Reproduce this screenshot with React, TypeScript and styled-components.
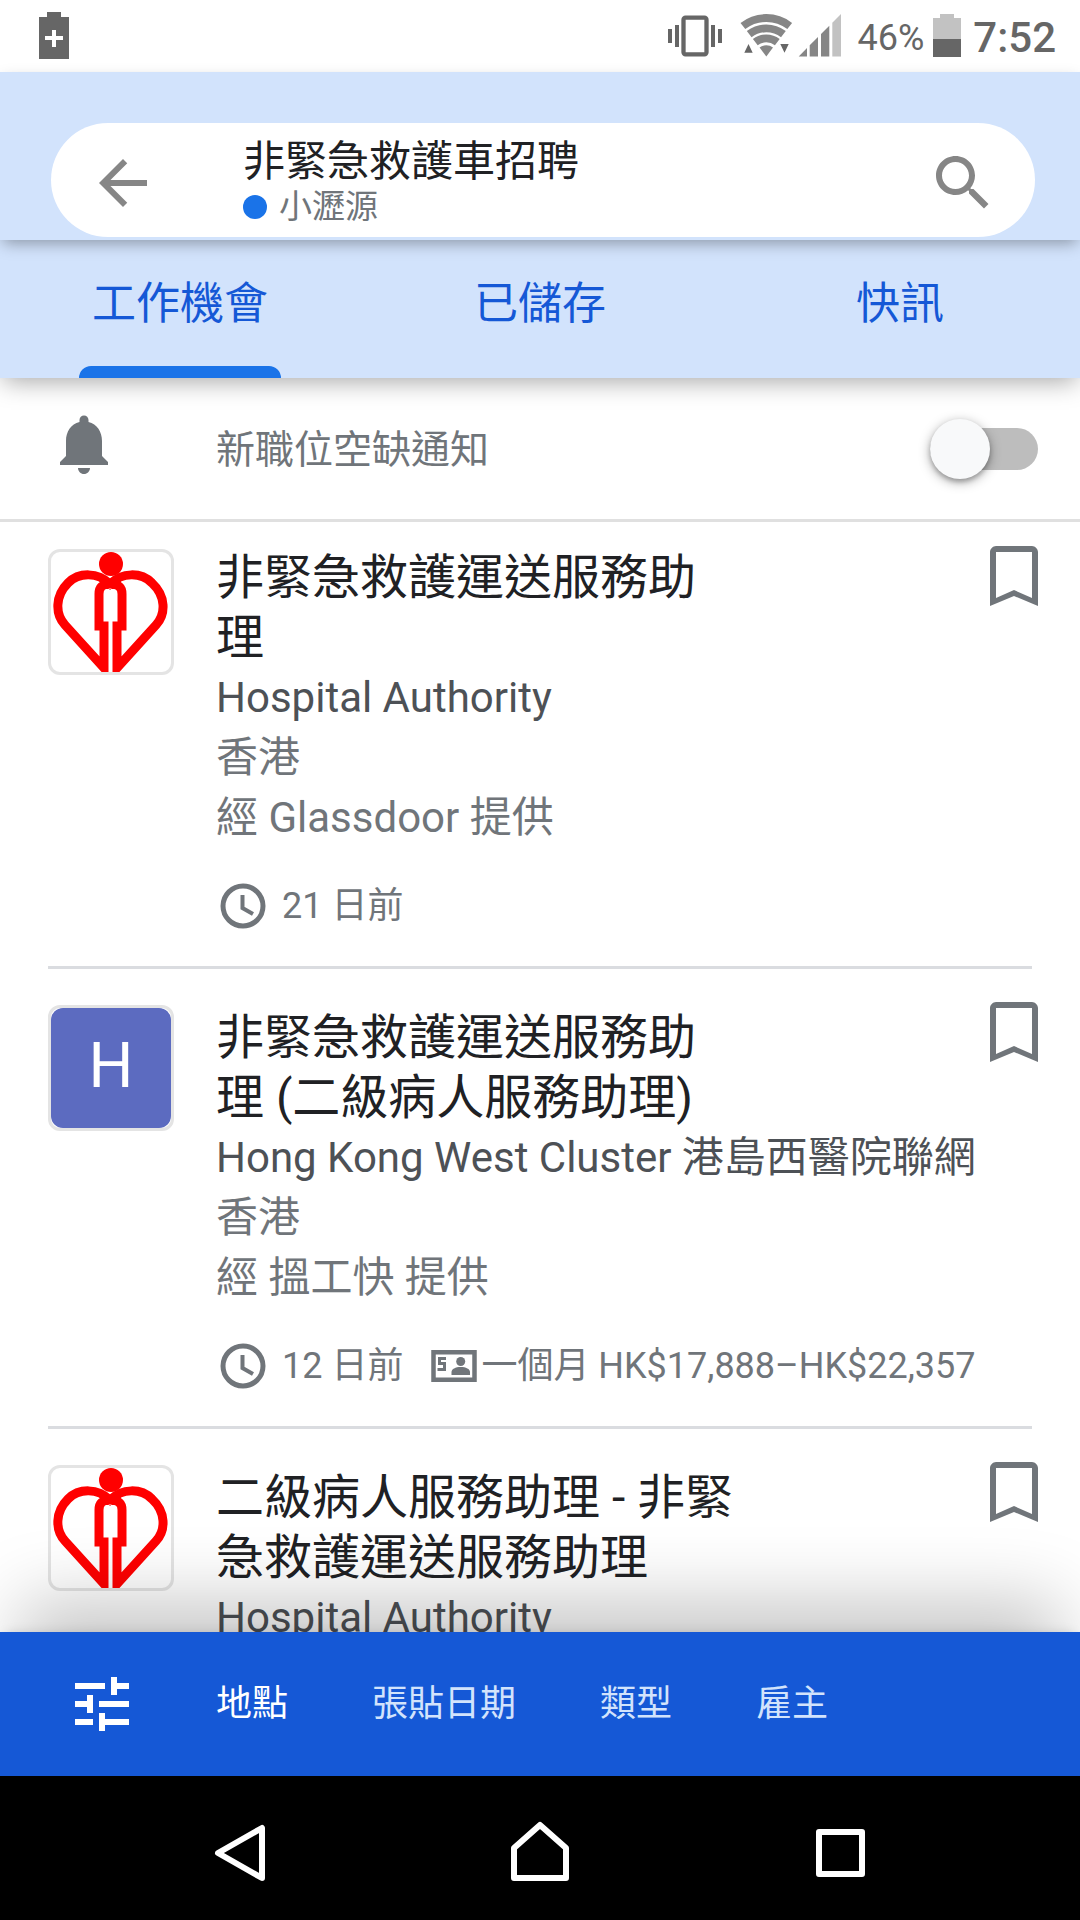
import React from "react";
import styled, { createGlobalStyle } from "styled-components";

const GlobalStyle = createGlobalStyle`
  *, *::before, *::after { box-sizing: border-box; }
  body {
    margin: 0;
    background: #fff;
    font-family: Roboto, "Noto Sans CJK TC", sans-serif;
    color: #202124;
  }
  button { font: inherit; border: 0; padding: 0; background: none; cursor: pointer; }
  h1, h2, p, ul { margin: 0; padding: 0; font-weight: 400; }
  svg { display: block; flex: none; }
`;

const Screen = styled.div`
  height: 100vh;
  display: flex;
  flex-direction: column;
`;

const StatusBar = styled.div`
  flex: none;
  height: 72px;
  padding: 0 24px 0 36px;
  display: flex;
  align-items: center;
  color: #666;
`;

const StatusRight = styled.div`
  margin-left: auto;
  display: flex;
  align-items: center;
`;

const BatteryLevel = styled.span`
  margin: 0 9px 0 15px;
  padding-top: 3px;
  font-size: 36px;
  line-height: 48px;
`;

const Clock = styled.span`
  margin-left: 12px;
  padding-top: 3px;
  font-size: 42px;
  line-height: 48px;
  font-weight: 500;
`;

const Header = styled.header`
  flex: none;
  position: relative;
  z-index: 2;
  padding: 51px 45px 3px 51px;
  background: #d2e3fc;
  box-shadow: 0 6px 15px -3px rgba(0, 0, 0, 0.35);
`;

const SearchBox = styled.div`
  height: 114px;
  padding: 5px 36px 0;
  border-radius: 57px;
  background: #fff;
  display: flex;
  align-items: center;
`;

const Query = styled.div`
  flex: 1;
  min-width: 0;
  padding-left: 84px;
`;

const QueryTitle = styled.h1`
  font-size: 42px;
  line-height: 48px;
`;

const QueryPlace = styled.p`
  display: flex;
  align-items: center;
  gap: 12px;
  font-size: 33px;
  line-height: 42px;
  color: #70757a;
`;

const Dot = styled.span`
  width: 24px;
  height: 24px;
  border-radius: 50%;
  background: #1a73e8;
`;

const Tabs = styled.nav`
  flex: none;
  position: relative;
  z-index: 1;
  height: 138px;
  display: grid;
  grid-template-columns: repeat(3, 1fr);
  background: #d2e3fc;
  box-shadow: 0 6px 24px -3px rgba(0, 0, 0, 0.36);
`;

const Tab = styled.button<{ $active?: boolean }>`
  display: flex;
  flex-direction: column;
  align-items: center;
  justify-content: flex-end;
  font-size: 44px;
  line-height: 124px;
  color: #1558d6;

  &::after {
    content: "";
    width: 202px;
    height: 12px;
    border-radius: 12px 12px 0 0;
    background: ${(p) => (p.$active ? "#1a73e8" : "transparent")};
  }
`;

const Main = styled.main`
  flex: 1;
  min-height: 0;
  overflow: auto;
  scrollbar-width: none;
`;

const AlertRow = styled.label`
  height: 144px;
  padding: 0 42px 0 48px;
  border-bottom: 3px solid #e0e0e0;
  display: flex;
  align-items: center;
  font-size: 39px;
  line-height: 48px;
  color: #70757a;

  svg { margin: 0 96px 10px 0; }
  span { padding-top: 2px; }
`;

const Switch = styled.input`
  appearance: none;
  position: relative;
  width: 108px;
  height: 42px;
  margin: 0 0 0 auto;
  border-radius: 21px;
  background: #bdbdbd;

  &::before {
    content: "";
    position: absolute;
    top: -9px;
    left: 0;
    width: 60px;
    height: 60px;
    border-radius: 50%;
    background: #f8f9fa;
    box-shadow: 0 3px 12px rgba(0, 0, 0, 0.35), 0 3px 4px rgba(0, 0, 0, 0.2);
  }
  &:checked { background: #8ab4f8; }
  &:checked::before { left: 48px; background: #1a73e8; }
`;

const JobList = styled.ul`
  list-style: none;
  padding: 0 48px;
`;

const JobBody = styled.div`
  min-width: 0;
  padding-top: 6px;
`;

const JobCard = styled.li`
  display: grid;
  grid-template-columns: 126px 1fr 48px;
  column-gap: 42px;
  align-items: start;
  padding: 33px 0 36px;
  border-bottom: 3px solid #dadce0;

  &:first-child { padding-top: 24px; }
  &:first-child ${JobBody} { padding-top: 2px; }
`;

const Logo = styled.div<{ $fill?: string }>`
  width: 126px;
  height: 126px;
  margin-top: 3px;
  border: 3px solid #e4e4e4;
  border-radius: 12px;
  overflow: hidden;
  display: flex;
  align-items: center;
  justify-content: center;

  span {
    width: 120px;
    height: 120px;
    border-radius: 12px;
    background: ${(p) => p.$fill ?? "transparent"};
    color: #fff;
    font-size: 63px;
    line-height: 116px;
    text-align: center;
  }
`;

const JobTitle = styled.h2`
  max-width: 524px;
  font-size: 48px;
  line-height: 60px;
`;

const JobLine = styled.p<{ $strong?: boolean }>`
  font-size: 42px;
  line-height: 60px;
  white-space: nowrap;
  color: ${(p) => (p.$strong ? "#4d5156" : "#70757a")};
`;

const JobMeta = styled.div`
  height: 48px;
  margin-top: 34px;
  display: flex;
  align-items: center;
  font-size: 36px;
  line-height: 48px;
  white-space: nowrap;
  color: #70757a;
`;

const Posted = styled.span`
  margin: 0 27px 0 15px;
`;

const Pay = styled.span`
  margin-left: 3px;
`;

const SaveButton = styled.button`
  width: 48px;
  color: #70757a;
  margin-left: 6px;
`;

const FilterBar = styled.nav`
  flex: none;
  position: relative;
  z-index: 1;
  height: 144px;
  padding: 0 66px;
  display: flex;
  align-items: center;
  gap: 84px;
  background: #1558d6;
  box-shadow: 0 -52px 72px -20px rgba(0, 0, 0, 0.22), 0 -3px 12px -6px rgba(0, 0, 0, 0.2);
`;

const FilterIcon = styled.button`
  color: #fff;
  margin-right: -6px;
`;

const Filter = styled.button<{ $active?: boolean }>`
  font-size: 36px;
  line-height: 48px;
  color: ${(p) => (p.$active ? "#fff" : "#d2e3fc")};
`;

const SystemNav = styled.nav`
  flex: none;
  position: relative;
  z-index: 2;
  height: 144px;
  padding: 0 90px;
  display: grid;
  grid-template-columns: repeat(3, 1fr);
  place-items: center;
  background: #000;
  color: #fff;

  button { color: inherit; }
`;

const Stroke = { fill: "none", stroke: "currentColor", strokeWidth: 6, strokeLinejoin: "round" as const };

const HospitalLogo = () => (
  <svg width="120" height="120" viewBox="0 0 120 120" aria-hidden="true">
    <g fill="none" stroke="#f00" strokeWidth="9">
      <path d="M59 32C47 20 28 20 17 31C4 44 4 62 14 73L53 116V74H48V42C48 34 53 32 59 32" />
      <path d="M59 32C71 20 90 20 101 31C115 44 115 62 105 73L66 116V74H71V42C71 34 66 32 59 32" />
    </g>
    <path d="M46 24L59 38L73 24L66 37H52Z" fill="#f00" />
    <circle cx="60" cy="12" r="12" fill="#f00" />
  </svg>
);

const ClockIcon = () => (
  <svg width="51" height="48" viewBox="0 0 51 48" aria-hidden="true">
    <circle cx="27" cy="24" r="20" fill="none" stroke="currentColor" strokeWidth="5" />
    <path d="M26.500 13V26L37 32" fill="none" stroke="currentColor" strokeWidth="4" />
  </svg>
);

const MoneyIcon = () => (
  <svg width="48" height="48" viewBox="0 0 48 48" aria-hidden="true">
    <path d="M3.500 10.200H44.500V37.800H3.500Z" fill="none" stroke="currentColor" strokeWidth="4.500" />
    <path d="M16 16.500H9.500V21.500H14.500V27.500H7.500" fill="none" stroke="currentColor" strokeWidth="3" />
    <circle cx="30.700" cy="19.500" r="4.500" fill="currentColor" />
    <path d="M21.500 33V30C21.500 27 25.500 25 30.700 25S40 27 40 30V33Z" fill="currentColor" />
  </svg>
);

const BookmarkIcon = () => (
  <svg width="48" height="60" viewBox="0 0 48 60" aria-hidden="true">
    <path fill="currentColor" d="M42 0H6C3 0 0 3 0 6V60L24 50L48 60V6C48 3 45 0 42 0ZM42 52L24 44L6 52V6H42Z" />
  </svg>
);

type Job = {
  initial?: string;
  title: string;
  company: string;
  place?: string;
  source?: string;
  posted?: string;
  pay?: string;
};

const jobs: Job[] = [
  {
    title: "非緊急救護運送服務助理",
    company: "Hospital Authority",
    place: "香港",
    source: "經 Glassdoor 提供",
    posted: "21 日前",
  },
  {
    initial: "H",
    title: "非緊急救護運送服務助理 (二級病人服務助理)",
    company: "Hong Kong West Cluster 港島西醫院聯網",
    place: "香港",
    source: "經 搵工快 提供",
    posted: "12 日前",
    pay: "一個月 HK$17,888–HK$22,357",
  },
  {
    title: "二級病人服務助理 - 非緊急救護運送服務助理",
    company: "Hospital Authority",
  },
];

const filters = ["地點", "張貼日期", "類型", "雇主"];
const tabs = ["工作機會", "已儲存", "快訊"];

export default function App() {
  return (
    <Screen lang="zh-Hant">
      <GlobalStyle />
      <StatusBar>
        <svg width="36" height="48" viewBox="0 0 36 48" fill="currentColor" aria-hidden="true">
          <path d="M11 0H25V5H33V47H3V5H11ZM16 18V24H9V28H16V35H20V28H27V24H20V18Z" fillRule="evenodd" />
        </svg>
        <StatusRight>
          <svg width="54" height="44" viewBox="0 0 54 44" aria-hidden="true">
            <rect x="15.500" y="3.700" width="23" height="36.600" rx="2" fill="none" stroke="currentColor" strokeWidth="4.300" />
            <path d="M0 15H4V29H0ZM7 11H11V33H7ZM43 11H47V33H43ZM50 15H54V29H50Z" fill="currentColor" />
          </svg>
          <svg width="120" height="44" viewBox="0 0 120 44" aria-hidden="true">
            <g fill="none" stroke="#868686" strokeWidth="7.800">
              <path d="M20.900 12A38.300 38.300 0 0 1 67.700 12" />
              <path d="M27.200 20.200A28 28 0 0 1 61.400 20.200" />
              <path d="M33.300 28.100A18 18 0 0 1 55.300 28.100" />
            </g>
            <path d="M37.600 33.600A11 11 0 0 1 51 33.600L44.300 42.500Z" fill="#868686" />
            <path d="M22.300 38.700L26.500 30L30.700 38.700ZM58.300 30H66.700L62.500 38.700Z" fill="#666" />
            <path d="M76.700 42.500L85 34V42.500ZM87.700 42.500V31.300L96 23V42.500ZM99 42.500V20L107.300 11.700V42.500Z" fill="#868686" />
            <path d="M110.300 42.500V8.700L119 0V42.500Z" fill="#c2c2c2" />
          </svg>
          <BatteryLevel>46%</BatteryLevel>
          <svg width="28" height="44" viewBox="0 0 28 44" aria-hidden="true">
            <path d="M7 0H21V4H28V26H0V4H7Z" fill="#c2c2c2" />
            <path d="M0 25H28V43H0Z" fill="#666" />
          </svg>
          <Clock>7:52</Clock>
        </StatusRight>
      </StatusBar>

      <Header>
        <SearchBox>
          <button aria-label="返回">
            <svg width="72" height="72" viewBox="0 0 24 24" fill="#868686">
              <path d="M20 11H7.830l5.590-5.590L12 4l-8 8 8 8 1.410-1.410L7.830 13H20v-2z" />
            </svg>
          </button>
          <Query>
            <QueryTitle>非緊急救護車招聘</QueryTitle>
            <QueryPlace>
              <Dot />
              小瀝源
            </QueryPlace>
          </Query>
          <button aria-label="搜尋">
            <svg width="72" height="72" viewBox="0 0 24 24" fill="#868686">
              <path d="M15.500 14h-.79l-.28-.27C15.410 12.590 16 11.110 16 9.500 16 5.910 13.090 3 9.500 3S3 5.910 3 9.500 5.910 16 9.500 16c1.610 0 3.090-.59 4.230-1.570l.27.28v.79l5 4.990L20.490 19l-4.990-5zm-6 0C7.010 14 5 11.990 5 9.500S7.010 5 9.500 5 14 7.010 14 9.500 11.990 14 9.500 14z" />
            </svg>
          </button>
        </SearchBox>
      </Header>

      <Tabs>
        {tabs.map((t, i) => (
          <Tab key={t} $active={i === 0}>
            {t}
          </Tab>
        ))}
      </Tabs>

      <Main>
        <AlertRow>
          <svg width="72" height="72" viewBox="0 0 24 24" fill="currentColor" aria-hidden="true">
            <path d="M12 22c1.100 0 2-.9 2-2h-4c0 1.100.89 2 2 2zm6-6v-5c0-3.070-1.640-5.640-4.500-6.320V4c0-.83-.67-1.500-1.500-1.500s-1.500.67-1.500 1.500v.68C7.630 5.360 6 7.920 6 11v5l-2 2v1h16v-1l-2-2z" />
          </svg>
          <span>新職位空缺通知</span>
          <Switch type="checkbox" role="switch" />
        </AlertRow>

        <JobList>
          {jobs.map((job, i) => (
            <JobCard key={i}>
              <Logo $fill={job.initial && "#5c6bc0"}>
                {job.initial ? <span>{job.initial}</span> : <HospitalLogo />}
              </Logo>
              <JobBody>
                <JobTitle>{job.title}</JobTitle>
                <JobLine $strong>{job.company}</JobLine>
                {job.place && <JobLine>{job.place}</JobLine>}
                {job.source && <JobLine>{job.source}</JobLine>}
                {job.posted && (
                  <JobMeta>
                    <ClockIcon />
                    <Posted>{job.posted}</Posted>
                    {job.pay && (
                      <>
                        <MoneyIcon />
                        <Pay>{job.pay}</Pay>
                      </>
                    )}
                  </JobMeta>
                )}
              </JobBody>
              <SaveButton aria-label="儲存">
                <BookmarkIcon />
              </SaveButton>
            </JobCard>
          ))}
        </JobList>
      </Main>

      <FilterBar>
        <FilterIcon aria-label="篩選">
          <svg width="72" height="72" viewBox="0 0 24 24" fill="currentColor">
            <path d="M3 17v2h6v-2H3zM3 5v2h10V5H3zm10 16v-2h8v-2h-8v-2h-2v6h2zM7 9v2H3v2h4v2h2V9H7zm14 4v-2H11v2h10zm-6-4h2V7h4V5h-4V3h-2v6z" />
          </svg>
        </FilterIcon>
        {filters.map((f, i) => (
          <Filter key={f} $active={i === 0}>
            {f}
          </Filter>
        ))}
      </FilterBar>

      <SystemNav>
        <button aria-label="返回">
          <svg width="72" height="72" viewBox="0 0 72 72">
            <path d="M14 41L58 16V66Z" {...Stroke} />
          </svg>
        </button>
        <button aria-label="主畫面">
          <svg width="72" height="72" viewBox="0 0 72 72">
            <path d="M10 66V36L36 13L62 36V66Z" {...Stroke} />
          </svg>
        </button>
        <button aria-label="最近使用的應用程式">
          <svg width="72" height="72" viewBox="0 0 72 72">
            <path d="M15 20H58V62H15Z" {...Stroke} />
          </svg>
        </button>
      </SystemNav>
    </Screen>
  );
}
